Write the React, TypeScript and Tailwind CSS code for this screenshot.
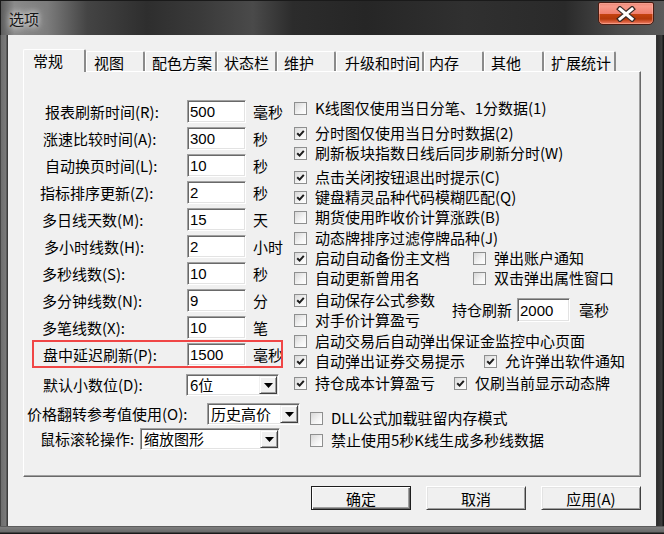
import React from 'react';

const FONT = "font-['Noto_Sans_CJK_SC','Noto_Sans',sans-serif]";

type Row = { label: string; pl: string; value: string; unit: string };

const rows: Row[] = [
  { label: '报表刷新时间(R):', pl: 'pl-[21px]', value: '500', unit: '毫秒' },
  { label: '涨速比较时间(A):', pl: 'pl-[19px]', value: '300', unit: '秒' },
  { label: '自动换页时间(L):', pl: 'pl-[21px]', value: '10', unit: '秒' },
  { label: '指标排序更新(Z):', pl: 'pl-[16px]', value: '2', unit: '秒' },
  { label: '多日线天数(M):', pl: 'pl-[18px]', value: '15', unit: '天' },
  { label: '多小时线数(H):', pl: 'pl-[20px]', value: '2', unit: '小时' },
  { label: '多秒线数(S):', pl: 'pl-[18px]', value: '10', unit: '秒' },
  { label: '多分钟线数(N):', pl: 'pl-[18px]', value: '9', unit: '分' },
  { label: '多笔线数(X):', pl: 'pl-[18px]', value: '10', unit: '笔' },
  { label: '盘中延迟刷新(P):', pl: 'pl-[19px]', value: '1500', unit: '毫秒' },
];

const tabs = [
  { t: '常规', w: 'w-[63px]', pl: 'pl-[9px]', active: true },
  { t: '视图', w: 'w-[59px]', pl: 'pl-[7px]' },
  { t: '配色方案', w: 'w-[72px]', pl: 'pl-[6px]' },
  { t: '状态栏', w: 'w-[60px]', pl: 'pl-[6px]' },
  { t: '维护', w: 'w-[59px]', pl: 'pl-[6px]' },
  { t: '升级和时间', w: 'w-[88px]', pl: 'pl-[8px]' },
  { t: '内存', w: 'w-[60px]', pl: 'pl-[4px]' },
  { t: '其他', w: 'w-[60px]', pl: 'pl-[6px]' },
  { t: '扩展统计', w: 'w-[72px]', pl: 'pl-[6px]' },
];

const Field = ({ value, w = 'w-[59px]', h = 'h-[23px]' }: { value: string; w?: string; h?: string }) => (
  <div
    className={`${w} ${h} shrink-0 bg-white border border-t-[#a0a0a0] border-l-[#a0a0a0] border-r-white border-b-white shadow-[inset_1px_1px_0_#696969,inset_-1px_-1px_0_#e3e3e3] pl-[2px] flex items-center font-['Liberation_Sans',sans-serif] text-[15px] leading-none`}
  >
    {value}
  </div>
);

const Combo = ({ value, w }: { value: string; w: string }) => (
  <div
    className={`${w} h-[22px] shrink-0 bg-white border border-t-[#a0a0a0] border-l-[#a0a0a0] border-r-white border-b-white shadow-[inset_1px_1px_0_#696969,inset_-1px_-1px_0_#e3e3e3] flex items-center`}
  >
    <span className="flex-1 pl-[3px] text-[15px] leading-[18px] whitespace-nowrap">{value}</span>
    <span className="w-[18px] h-[18px] mr-[1px] bg-[#f0f0f0] border border-t-[#f0f0f0] border-l-[#f0f0f0] border-r-[#404040] border-b-[#404040] shadow-[inset_1px_1px_0_#fff,inset_-1px_-1px_0_#a0a0a0] flex items-center justify-center">
      <svg width="9" height="5" viewBox="0 0 9 5">
        <path d="M0 0H9L4.5 5Z" fill="#000" />
      </svg>
    </span>
  </div>
);

const Box = ({ checked }: { checked?: boolean }) => (
  <span className="w-[13px] h-[13px] shrink-0 border border-[#8e8f8f] bg-[linear-gradient(135deg,#d8d8d8,#f4f4f4_60%,#ffffff)] flex items-center justify-center">
    {checked && (
      <svg width="9" height="9" viewBox="0 0 9 9">
        <path d="M1.2 4.2 L3.6 6.6 L7.8 1.8" stroke="#1c1c1c" strokeWidth="2" fill="none" />
      </svg>
    )}
  </span>
);

const Check = ({ label, checked, className = '' }: { label: string; checked?: boolean; className?: string }) => (
  <div className={`h-[20px] flex items-center ${className}`}>
    <Box checked={checked} />
    <span className="ml-[8px] text-[15px] leading-[20px] whitespace-nowrap">{label}</span>
  </div>
);

const Btn = ({ label, primary }: { label: string; primary?: boolean }) => (
  <div
    className={`w-[100px] h-[24px] flex items-center justify-center text-[15px] leading-none bg-[#f0f0f0] border ${
      primary
        ? 'border-[#1e1e1e] shadow-[inset_1px_1px_0_#fff,inset_-1px_-1px_0_#696969,inset_-2px_-2px_0_#a0a0a0]'
        : 'border-t-white border-l-white border-r-[#404040] border-b-[#404040] shadow-[inset_1px_1px_0_#e3e3e3,inset_-1px_-1px_0_#a0a0a0]'
    }`}
  >
    {label}
  </div>
);

const CloseBtn = () => (
  <div className="mt-[1px] w-[56px] h-[23px] rounded-t-[2px] rounded-b-[5px] border border-[#4a1c12] bg-[linear-gradient(180deg,#e98272_0%,#f79a8a_15%,#f08070_50%,#c4420f_54%,#b4380a_76%,#db5f3f_90%,#ee8268_100%)] shadow-[inset_0_0_0_1px_rgba(255,190,175,0.45)] flex items-center justify-center">
    <svg width="20" height="16" viewBox="0 0 20 16">
      <path d="M4 3 L16 13 M16 3 L4 13" stroke="#3a2a26" strokeWidth="5.5" strokeLinecap="square" />
      <path d="M4 3 L16 13 M16 3 L4 13" stroke="#ffffff" strokeWidth="3" strokeLinecap="square" />
    </svg>
  </div>
);

export default function App() {
  return (
    <div className={`w-[664px] h-[534px] flex flex-col overflow-hidden text-black ${FONT}`}>
      {/* title bar */}
      <div className="h-[35px] shrink-0 flex items-start justify-between pl-[8px] pr-[10px] border-t border-l border-[#1a1a1a] bg-[linear-gradient(90deg,#5c5c5c_0%,#8a8a8a_2%,#7c7c7c_7%,#444_13%,#2e2e2e_22%,#3a3a3a_30%,#4a4a4a_38%,#2c2c2c_44%,#262626_55%,#303030_70%,#2a2a2a_85%,#4a4a4a_93%,#5a5a5a_100%)]">
        <div className="pt-[9px] text-[15px] leading-[18px] text-[#161616] [text-shadow:0_0_6px_#ffffff,0_0_10px_#dddddd]">
          选项
        </div>
        <CloseBtn />
      </div>

      <div className="flex flex-1">
        <div className="w-[8px] bg-[linear-gradient(90deg,#1a1a1a_0px,#6e6e6e_1px,#7a7a7a_6px,#3c3c3c_7px)]" />

        {/* client */}
        <div className="w-[648px] h-[491px] bg-[#f0f0f0] pt-[14px] px-[15px] flex flex-col">
          {/* tabs */}
          <div className="h-[22px] flex items-end">
            {tabs.map((tab) => (
              <div
                key={tab.t}
                className={`${tab.w} ${tab.pl} ${
                  tab.active ? 'h-[23px] -mb-px relative z-10' : 'h-[20px]'
                } bg-[#f0f0f0] border-t border-l border-white border-r-2 border-r-[#8a8a8a] rounded-t-[2px] text-[15px] leading-[20px] whitespace-nowrap pt-px`}
              >
                {tab.t}
              </div>
            ))}
          </div>

          {/* panel */}
          <div className="h-[406px] bg-[#f0f0f0] border border-t-white border-l-white border-r-[#696969] border-b-[#696969] shadow-[inset_-1px_-1px_0_#a0a0a0]">
            <div className="pt-[26px] flex">
              {/* left column */}
              <div className="w-[270px] flex flex-col">
                {rows.map((r, i) => (
                  <div key={r.label} className="h-[27px] flex items-center relative">
                    <div className={`w-[163px] ${r.pl} text-[15px] leading-[20px] whitespace-nowrap`}>{r.label}</div>
                    <Field value={r.value} />
                    <span className="ml-[7px] text-[15px] leading-[20px] whitespace-nowrap">{r.unit}</span>
                    {i === rows.length - 1 && (
                      <div className="absolute left-[8px] -top-px w-[251px] h-[28px] border-2 border-[#f04646]" />
                    )}
                  </div>
                ))}
                <div className="mt-[6px] h-[22px] flex items-center">
                  <div className="w-[162px] pl-[19px] text-[15px] leading-[20px] whitespace-nowrap">默认小数位(D):</div>
                  <Combo value="6位" w="w-[93px]" />
                </div>
              </div>

              {/* right column */}
              <div className="flex flex-col">
                <Check label="K线图仅使用当日分笔、1分数据(1)" />
                <Check className="mt-[5px]" checked label="分时图仅使用当日分时数据(2)" />
                <Check checked label="刷新板块指数日线后同步刷新分时(W)" />
                <Check className="mt-[4px]" checked label="点击关闭按钮退出时提示(C)" />
                <Check checked label="键盘精灵品种代码模糊匹配(Q)" />
                <Check label="期货使用昨收价计算涨跌(B)" />
                <Check className="mt-px" label="动态牌排序过滤停牌品种(J)" />
                <div className="h-[20px] flex items-center">
                  <div className="w-[179px]">
                    <Check checked label="启动自动备份主文档" />
                  </div>
                  <Check label="弹出账户通知" />
                </div>
                <div className="h-[20px] flex items-center">
                  <div className="w-[179px]">
                    <Check label="自动更新曾用名" />
                  </div>
                  <Check label="双击弹出属性窗口" />
                </div>
                <div className="mt-[2px] flex items-center">
                  <div className="w-[158px] flex flex-col">
                    <Check checked label="自动保存公式参数" />
                    <Check label="对手价计算盈亏" />
                  </div>
                  <span className="text-[15px] leading-[20px] whitespace-nowrap">持仓刷新</span>
                  <div className="ml-[5px]">
                    <Field value="2000" w="w-[53px]" h="h-[24px]" />
                  </div>
                  <span className="ml-[9px] text-[15px] leading-[20px] whitespace-nowrap">毫秒</span>
                </div>
                <Check className="mt-px" label="启动交易后自动弹出保证金监控中心页面" />
                <div className="h-[20px] flex items-center">
                  <div className="w-[190px]">
                    <Check checked label="自动弹出证券交易提示" />
                  </div>
                  <Check checked label="允许弹出软件通知" />
                </div>
                <div className="mt-[2px] h-[20px] flex items-center">
                  <div className="w-[160px]">
                    <Check checked label="持仓成本计算盈亏" />
                  </div>
                  <Check checked label="仅刷当前显示动态牌" />
                </div>
              </div>
            </div>

            {/* bottom block */}
            <div className="mt-[7px] flex">
              <div className="w-[286px] flex flex-col">
                <div className="h-[22px] flex items-center">
                  <div className="w-[183px] pl-[3px] text-[15px] leading-[20px] whitespace-nowrap">价格翻转参考值使用(O):</div>
                  <Combo value="历史高价" w="w-[93px]" />
                </div>
                <div className="mt-[3px] h-[22px] flex items-center">
                  <div className="w-[116px] pl-[16px] text-[15px] leading-[20px] whitespace-nowrap">鼠标滚轮操作:</div>
                  <Combo value="缩放图形" w="w-[140px]" />
                </div>
              </div>
              <div className="flex flex-col">
                <Check className="mt-[5px]" label="DLL公式加载驻留内存模式" />
                <Check className="mt-[2px]" label="禁止使用5秒K线生成多秒线数据" />
              </div>
            </div>
          </div>

          {/* buttons */}
          <div className="mt-[9px] flex justify-end gap-[15px]">
            <Btn label="确定" primary />
            <Btn label="取消" />
            <Btn label="应用(A)" />
          </div>
        </div>

        <div className="w-[8px] bg-[linear-gradient(90deg,#3a3a3a_0px,#2c2c2c_1px,#3e3e3e_6px,#161616_7px)]" />
      </div>

      {/* bottom frame */}
      <div className="h-[8px] shrink-0 bg-[linear-gradient(180deg,#3a3a3a_0px,#7e7e7e_1px,#6a6a6a_6px,#1a1a1a_7px)]" />
    </div>
  );
}
